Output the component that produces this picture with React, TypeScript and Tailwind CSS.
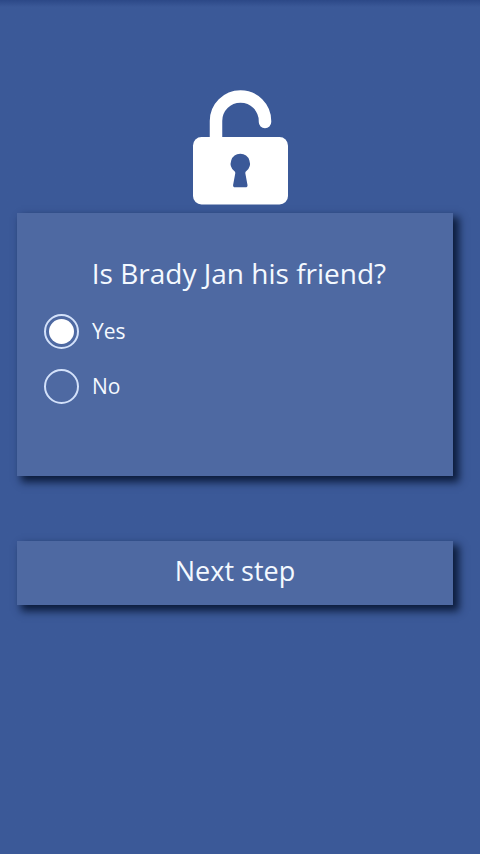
import { useState } from 'react';

const options = ['Yes', 'No'];

function UnlockedPadlock() {
  return (
    <svg viewBox="0 0 96 116" className="h-[116px] w-24" aria-hidden="true">
      <path
        d="M24 54V31a24.500 24.500 0 0 1 49 0v1"
        fill="none"
        stroke="#fff"
        strokeWidth="12.500"
        strokeLinecap="round"
        strokeLinejoin="round"
      />
      <rect x="1" y="47" width="95" height="67.500" rx="8.500" fill="#fff" />
      <path
        d="M48.300 63.800a9.700 9.700 0 0 1 5.800 17.400c-.8.700-.9 1.500-.7 2.500l2.100 11.300c.2 1.500-.6 2.300-2 2.300H43.100c-1.400 0-2.200-.8-2-2.300l2.100-11.300c.2-1 .1-1.800-.7-2.500a9.700 9.700 0 0 1 5.800-17.400z"
        fill="#3b5998"
      />
    </svg>
  );
}

export default function App() {
  const [answer, setAnswer] = useState('Yes');

  return (
    <main className="min-h-screen bg-[#3b5998] bg-linear-to-b from-[#2c4887] to-[#3b5998] to-[7px] pt-[90px] font-['Open_Sans','Noto_Sans',sans-serif] text-[#f4f9ff]">
      <form className="flex flex-col pr-[27px] pl-[17px]" onSubmit={(e) => e.preventDefault()}>
        <div className="mb-[7px] flex justify-center pl-[10px]">
          <UnlockedPadlock />
        </div>

        <fieldset className="bg-[#4e69a2] px-[27px] pt-10 pb-[72px] shadow-[5px_5px_8px_1px_#0c1c3c]">
          <legend className="float-left w-full pl-2 text-center text-[28px] leading-10">
            Is Brady Jan his friend?
          </legend>
          <div className="clear-both flex flex-col gap-5 pt-[21px]">
            {options.map((option) => (
              <label key={option} className="flex h-[35px] items-center gap-[13px] text-[21px]">
                <input
                  type="radio"
                  name="friend"
                  value={option}
                  checked={answer === option}
                  onChange={() => setAnswer(option)}
                  className="grid size-[35px] appearance-none place-items-center rounded-full border-2 border-[#d3e1fa] before:size-[25px] before:rounded-full checked:before:bg-white"
                />
                {option}
              </label>
            ))}
          </div>
        </fieldset>

        <button
          type="submit"
          className="mt-[65px] h-16 bg-[#4e69a2] pb-1 text-[27px] shadow-[5px_5px_8px_1px_#0c1c3c]"
        >
          Next step
        </button>
      </form>
    </main>
  );
}
